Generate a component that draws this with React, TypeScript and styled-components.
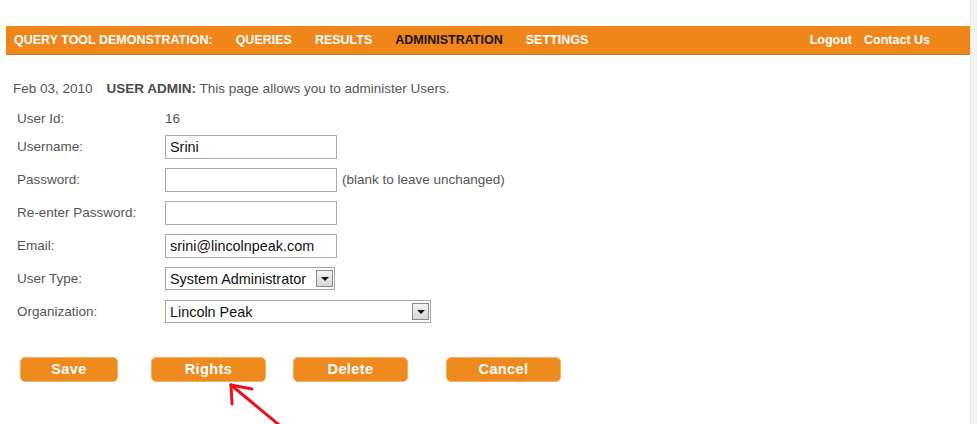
import React from "react";
import styled, { createGlobalStyle } from "styled-components";

const GlobalStyle = createGlobalStyle`
  html, body { margin: 0; padding: 0; background: #ffffff; }
  body { font-family: "Liberation Sans", Arial, sans-serif; }
`;

const Page = styled.div`
  display: flex;
  width: 977px;
  height: 424px;
  overflow: hidden;
  position: relative;
`;

const Main = styled.div`
  flex: 1;
  display: flex;
  flex-direction: column;
  padding: 26px 0 0 6px;
`;

const RightStrip = styled.div`
  width: 6px;
  background: #f3f3ef;
  border-left: 1px solid #e6e6e0;
`;

const NavBar = styled.div`
  height: 28px;
  background: #f0861a;
  border-bottom: 1px solid #c9782c;
  display: flex;
  align-items: center;
  justify-content: space-between;
  padding: 0 40px 0 8px;
`;

const NavGroup = styled.div<{ $gap: number }>`
  display: flex;
  align-items: center;
  gap: ${(p) => p.$gap}px;
`;

const NavItem = styled.span<{ $active?: boolean }>`
  font-size: 12.5px;
  font-weight: bold;
  color: ${(p) => (p.$active ? "#1a1208" : "#ffffff")};
  white-space: nowrap;
`;

const DateLine = styled.div`
  margin-top: 23px;
  height: 20px;
  display: flex;
  align-items: center;
  gap: 14px;
  padding-left: 7px;
  font-size: 13.5px;
  color: #555555;
`;

const Strong = styled.b`
  color: #4a4a4a;
`;

const Form = styled.div`
  margin-top: 8px;
  display: flex;
  flex-direction: column;
  padding-left: 11px;
`;

const Row = styled.div<{ $height: number }>`
  display: grid;
  grid-template-columns: 148px auto;
  align-items: center;
  height: ${(p) => p.$height}px;
`;

const Label = styled.span`
  font-size: 13.5px;
  color: #555555;
`;

const Value = styled.div`
  display: flex;
  align-items: center;
  gap: 5px;
  font-size: 13.5px;
  color: #555555;
`;

const TextBox = styled.div`
  box-sizing: border-box;
  width: 172px;
  height: 24px;
  border: 1px solid #a9a9a9;
  background: #ffffff;
  display: flex;
  align-items: center;
  padding-left: 4px;
  font-size: 14.4px;
  color: #111111;
`;

const SelectBox = styled.div<{ $width: number }>`
  box-sizing: border-box;
  width: ${(p) => p.$width}px;
  height: 23px;
  border: 1px solid #a5a5a5;
  background: #ffffff;
  display: flex;
  align-items: center;
  justify-content: space-between;
  padding: 0 1px 0 4px;
  font-size: 14.4px;
  color: #111111;
`;

const ArrowButton = styled.span`
  box-sizing: border-box;
  width: 17px;
  height: 17px;
  border: 1px solid #8a8a8a;
  background: linear-gradient(#f4f4f4, #d6d6d6);
  display: flex;
  align-items: center;
  justify-content: center;
  &::after {
    content: "";
    border-left: 4px solid transparent;
    border-right: 4px solid transparent;
    border-top: 4px solid #111111;
  }
`;

const Buttons = styled.div`
  margin-top: 29px;
  display: flex;
  padding-left: 14px;
`;

const Button = styled.button<{ $width: number; $offset: number }>`
  box-sizing: border-box;
  width: ${(p) => p.$width}px;
  height: 25px;
  margin-left: ${(p) => p.$offset}px;
  border: 1px solid #f3b166;
  border-radius: 5px;
  background: #ef8a1f;
  color: #ffffff;
  font-family: "Liberation Sans", Arial, sans-serif;
  font-size: 14.5px;
  font-weight: bold;
  letter-spacing: 0.4px;
  padding: 0 0 2px 0;
  cursor: pointer;
`;

const ArrowMark = styled.svg`
  position: absolute;
  left: 0;
  top: 0;
  pointer-events: none;
`;

export default function App() {
  return (
    <>
      <GlobalStyle />
      <Page>
        <Main>
          <NavBar>
            <NavGroup $gap={23}>
              <NavItem>QUERY TOOL DEMONSTRATION:</NavItem>
              <NavItem>QUERIES</NavItem>
              <NavItem>RESULTS</NavItem>
              <NavItem $active>ADMINISTRATION</NavItem>
              <NavItem>SETTINGS</NavItem>
            </NavGroup>
            <NavGroup $gap={12}>
              <NavItem>Logout</NavItem>
              <NavItem>Contact Us</NavItem>
            </NavGroup>
          </NavBar>
          <DateLine>
            <span>Feb 03, 2010</span>
            <span>
              <Strong>USER ADMIN:</Strong> This page allows you to administer Users.
            </span>
          </DateLine>
          <Form>
            <Row $height={24}>
              <Label>User Id:</Label>
              <Value>16</Value>
            </Row>
            <Row $height={33}>
              <Label>Username:</Label>
              <Value>
                <TextBox>Srini</TextBox>
              </Value>
            </Row>
            <Row $height={33}>
              <Label>Password:</Label>
              <Value>
                <TextBox />
                <span>(blank to leave unchanged)</span>
              </Value>
            </Row>
            <Row $height={33}>
              <Label>Re-enter Password:</Label>
              <Value>
                <TextBox />
              </Value>
            </Row>
            <Row $height={33}>
              <Label>Email:</Label>
              <Value>
                <TextBox>srini@lincolnpeak.com</TextBox>
              </Value>
            </Row>
            <Row $height={33}>
              <Label>User Type:</Label>
              <Value>
                <SelectBox $width={170}>
                  System Administrator
                  <ArrowButton />
                </SelectBox>
              </Value>
            </Row>
            <Row $height={33}>
              <Label>Organization:</Label>
              <Value>
                <SelectBox $width={266}>
                  Lincoln Peak
                  <ArrowButton />
                </SelectBox>
              </Value>
            </Row>
          </Form>
          <Buttons>
            <Button $width={98} $offset={0}>Save</Button>
            <Button $width={115} $offset={33}>Rights</Button>
            <Button $width={115} $offset={27}>Delete</Button>
            <Button $width={115} $offset={38}>Cancel</Button>
          </Buttons>
        </Main>
        <RightStrip />
        <ArrowMark width="977" height="424" viewBox="0 0 977 424">
          <g stroke="#e8121c" strokeWidth="3" strokeLinecap="round" fill="none">
            <line x1="231" y1="385" x2="290" y2="434" />
            <line x1="231" y1="385" x2="252" y2="389" />
            <line x1="231" y1="385" x2="232" y2="404" />
          </g>
        </ArrowMark>
      </Page>
    </>
  );
}
